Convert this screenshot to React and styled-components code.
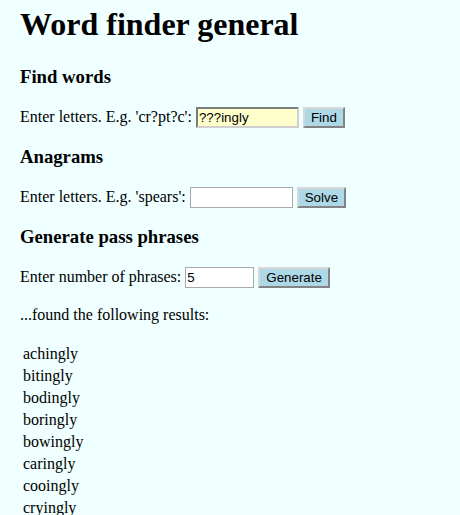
import React from "react";
import styled, { createGlobalStyle } from "styled-components";

const Global = createGlobalStyle`
  html, body { margin: 0; padding: 0; background: #f0ffff; }
  body { font-family: "Liberation Serif", "Times New Roman", serif; font-size: 16px; color: #000; }
`;

const Page = styled.div`
  padding: 0 20px;
`;

const Title = styled.h1`
  font-size: 32px;
  font-weight: bold;
  margin: 6px 0 23px;
`;

const Section = styled.h3`
  font-size: 18.72px;
  font-weight: bold;
  margin: 18px 0 0;
`;

const Row = styled.form`
  display: flex;
  align-items: center;
  margin: 18px 0 0;
  height: 22px;
`;

const Label = styled.span`
  margin-right: 4px;
`;

const Field = styled.input`
  font-family: "Liberation Sans", Arial, sans-serif;
  font-size: 13.33px;
  box-sizing: border-box;
  height: 21px;
  width: ${(p) => p.$w}px;
  padding: 1px 1px;
  background: ${(p) => (p.$hl ? "#ffffcc" : "#ffffff")};
  border: ${(p) => (p.$inset ? "2px inset #d0d0d0" : "1px solid #a9a9a9")};
  color: #000;
  outline: none;
  margin: 0 4px 0 0;
`;

const Btn = styled.button`
  font-family: "Liberation Sans", Arial, sans-serif;
  font-size: 13.33px;
  box-sizing: border-box;
  height: 21px;
  padding: 0 6px;
  background: #add8e6;
  border: 2px outset #d8d8d8;
  color: #000;
`;

const Note = styled.p`
  margin: 18px 0 0;
`;

const Results = styled.table`
  margin-top: 18px;
  border-spacing: 2px;
  td { padding: 1px; font-size: 16px; line-height: 18px; }
`;

const words = ["achingly", "bitingly", "bodingly", "boringly", "bowingly", "caringly", "cooingly", "cryingly", "curingly", "dotingly"];

export default function App() {
  return (
    <Page>
      <Global />
      <Title>Word finder general</Title>
      <Section>Find words</Section>
      <Row onSubmit={(e) => e.preventDefault()}>
        <Label>Enter letters. E.g. 'cr?pt?c':</Label>
        <Field $w={103} $hl $inset defaultValue="???ingly" />
        <Btn type="submit">Find</Btn>
      </Row>
      <Section>Anagrams</Section>
      <Row onSubmit={(e) => e.preventDefault()}>
        <Label>Enter letters. E.g. 'spears':</Label>
        <Field $w={103} />
        <Btn type="submit">Solve</Btn>
      </Row>
      <Section>Generate pass phrases</Section>
      <Row onSubmit={(e) => e.preventDefault()}>
        <Label>Enter number of phrases:</Label>
        <Field $w={69} defaultValue="5" />
        <Btn type="submit">Generate</Btn>
      </Row>
      <Note>...found the following results:</Note>
      <Results>
        <tbody>
          {words.map((w) => (
            <tr key={w}><td>{w}</td></tr>
          ))}
        </tbody>
      </Results>
    </Page>
  );
}
